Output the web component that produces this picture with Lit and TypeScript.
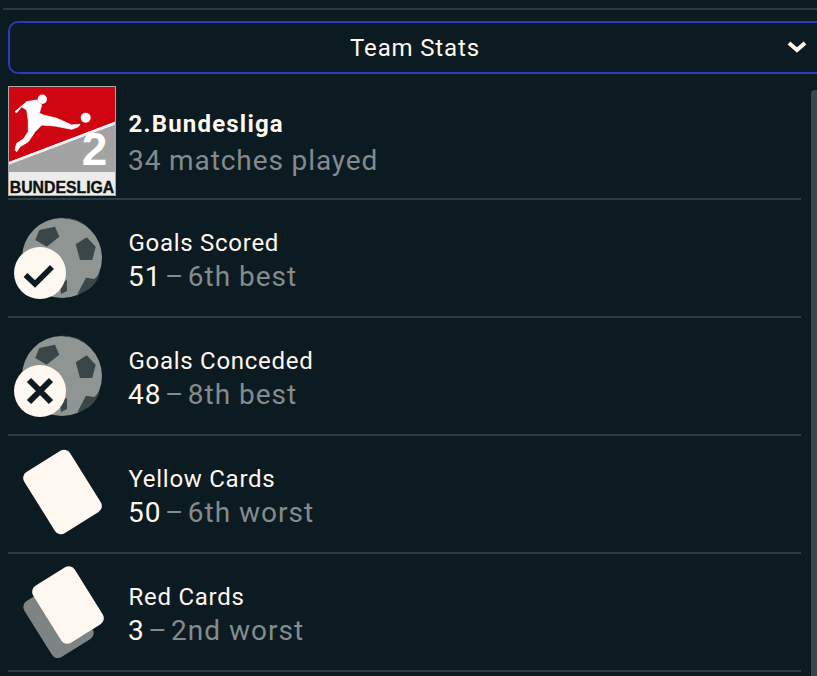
import { LitElement, html, css, svg } from "lit";
import { customElement } from "lit/decorators.js";

const ball = svg`
  <circle cx="54" cy="53" r="40" fill="#8f9593"/>
  <path d="M31.300 25l15.700-3.300 4.300 10-12.600 10-11.400-6.700z" fill="#3a4647"/>
  <path d="M78.700 32.300l9 9.400-3.400 13.300H72l-4.300-15.700z" fill="#3a4647"/>
  <path d="M69.300 89.300L78 72.700l8.300 1.300 5.500-5.500C89 79 80 87 69.300 89.300z" fill="#3a4647"/>
  <path d="M52 78l7-3 0 11-6 3z" fill="#3a4647"/>
  <path d="M50 13c10-1 20 1 27 6-8-4-18-6-27-6z" fill="#3a4647"/>
`;

const rows = [
  { icon: "scored", title: "Goals Scored", value: "51", rank: "6th best" },
  { icon: "conceded", title: "Goals Conceded", value: "48", rank: "8th best" },
  { icon: "yellow", title: "Yellow Cards", value: "50", rank: "6th worst" },
  { icon: "red", title: "Red Cards", value: "3", rank: "2nd worst" },
];

@customElement("app-root")
export class AppRoot extends LitElement {
  static styles = css`
    :host { display: block; width: 817px; height: 676px; overflow: hidden; background: #0c1a21; color: #fff8f0; font-family: Roboto, "Noto Sans", sans-serif; position: relative; }
    .top { height: 2px; background: #2c383c; margin: 8px 0 0 3px; }
    .select { box-sizing: border-box; height: 53px; margin: 11px -10px 0 8px; border: 2.500px solid #2e38b8; border-radius: 10px; display: grid; grid-template-columns: 1fr; align-items: center; position: relative; }
    .select span { font-size: 24px; letter-spacing: 0.85px; text-align: center; padding-right: 5px; }
    .chev { position: absolute; left: 777px; top: 17px; }
    .scroll { position: absolute; left: 811px; top: 90px; bottom: 0; width: 6px; background: #3a4649; border-radius: 4px 0 0 0; }
    .list { margin: 12px 16px 0 8px; }
    .row { display: flex; align-items: center; height: 116px; border-bottom: 2px solid #2e3b40; }
    .row:first-child { height: 112px; align-items: flex-start; }
    .icon { width: 108px; height: 108px; flex: none; margin: 2px 13px 0 0; display: block; }
    .logo { height: 110px; margin: 0 13px 0 0; }
    .text { display: flex; flex-direction: column; margin-left: -1px; margin-top: 4px; }
    .row:first-child .text { margin-top: 19px; }
    .title { font-size: 24px; line-height: 34px; letter-spacing: 0.72px; margin-left: 0.500px; }
    .name { font-weight: 700; letter-spacing: 1.2px; line-height: 38px; }
    .sub { font-size: 28px; line-height: 34px; letter-spacing: 1px; color: #848b8d; white-space: pre; }
    .first { letter-spacing: 0.9px; margin-top: 1px; }
    .sub b { font-weight: 400; color: #fff8f0; }
    .dash { margin: 0 -4.500px; }
    .logotext { font-family: "Liberation Sans", sans-serif; font-weight: 700; }
    .mark { stroke: #111; stroke-width: 0.400px; }
  `;

  private logo() {
    return html`<svg class="icon logo" viewBox="0 0 108 110">
      <rect x="0.500" y="0.500" width="107" height="109" fill="#ececec" stroke="#a8a8a8"/>
      <path d="M1 1h106v34.700L1 76z" fill="#cf0612"/>
      <path d="M1 78.500l106-40V86H1z" fill="#a3a3a3"/>
      <path d="M1 76l106-40.300v2.800L1 78.500z" fill="#f4f4f4"/>
      <circle cx="34.300" cy="13.300" r="4.700" fill="#fff"/>
      <path d="M7 25.700L18.700 15.700 28.700 14 33.700 19 31.300 27.300 35.300 29 48.700 32.300 63.700 39 72 38.300 70.300 40.700 63.700 43.300 47 40 33.700 39 27 45.700 20.300 55.700 12 60.700 8.700 65.700 7 64 8.700 57.300 15.300 53.300 20.300 45.700 20.300 34 18.700 24 13.700 20.700 8.700 26.700z" fill="#fff" stroke="#fff" stroke-width="0.800" stroke-linejoin="round"/>
      <circle cx="77.700" cy="31.700" r="5" fill="#fff"/>
      <text x="86.500" y="79" text-anchor="middle" font-size="46" fill="#fff" class="logotext">2</text>
      <text x="54" y="107" text-anchor="middle" font-size="16" fill="#111" class="logotext mark" textLength="104.500" lengthAdjust="spacingAndGlyphs">BUNDESLIGA</text>
    </svg>`;
  }

  private icon(kind: string) {
    if (kind === "scored" || kind === "conceded") {
      return html`<svg class="icon" viewBox="0 0 108 108">
        ${ball}
        <circle cx="32" cy="68" r="26" fill="#fff8f0"/>
        ${kind === "scored"
          ? svg`<path d="M17.500 70l9.500 9 17-17" fill="none" stroke="#0c1a21" stroke-width="5.500"/>`
          : svg`<path d="M21 57l22 22M43 57L21 79" fill="none" stroke="#0c1a21" stroke-width="6"/>`}
      </svg>`;
    }
    if (kind === "yellow") {
      return html`<svg class="icon" viewBox="0 0 108 108">
        <rect x="27.500" y="15" width="54" height="72" rx="7" fill="#fff8f0" transform="rotate(-32 54.500 51)"/>
      </svg>`;
    }
    return html`<svg class="icon" viewBox="0 0 108 108">
      <rect x="26.500" y="28" width="48" height="66" rx="7" fill="#7d8483" transform="rotate(-32 50.500 61)"/>
      <rect x="35.500" y="12.500" width="49" height="67" rx="7" fill="#fff8f0" transform="rotate(-32 60 46)"/>
    </svg>`;
  }

  render() {
    return html`
      <div class="top"></div>
      <div class="select">
        <span>Team Stats</span>
        <svg class="chev" width="20" height="14" viewBox="0 0 20 14"><path d="M2 3l8 7 8-7" fill="none" stroke="#fff8f0" stroke-width="4"/></svg>
      </div>
      <div class="scroll"></div>
      <div class="list">
        <div class="row">
          ${this.logo()}
          <div class="text">
            <div class="title name">2.Bundesliga</div>
            <div class="sub first">34 matches played</div>
          </div>
        </div>
        ${rows.map((r) => html`
          <div class="row">
            ${this.icon(r.icon)}
            <div class="text">
              <div class="title">${r.title}</div>
              <div class="sub"><b>${r.value}</b> <span class="dash">–</span> ${r.rank}</div>
            </div>
          </div>`)}
      </div>
    `;
  }
}
